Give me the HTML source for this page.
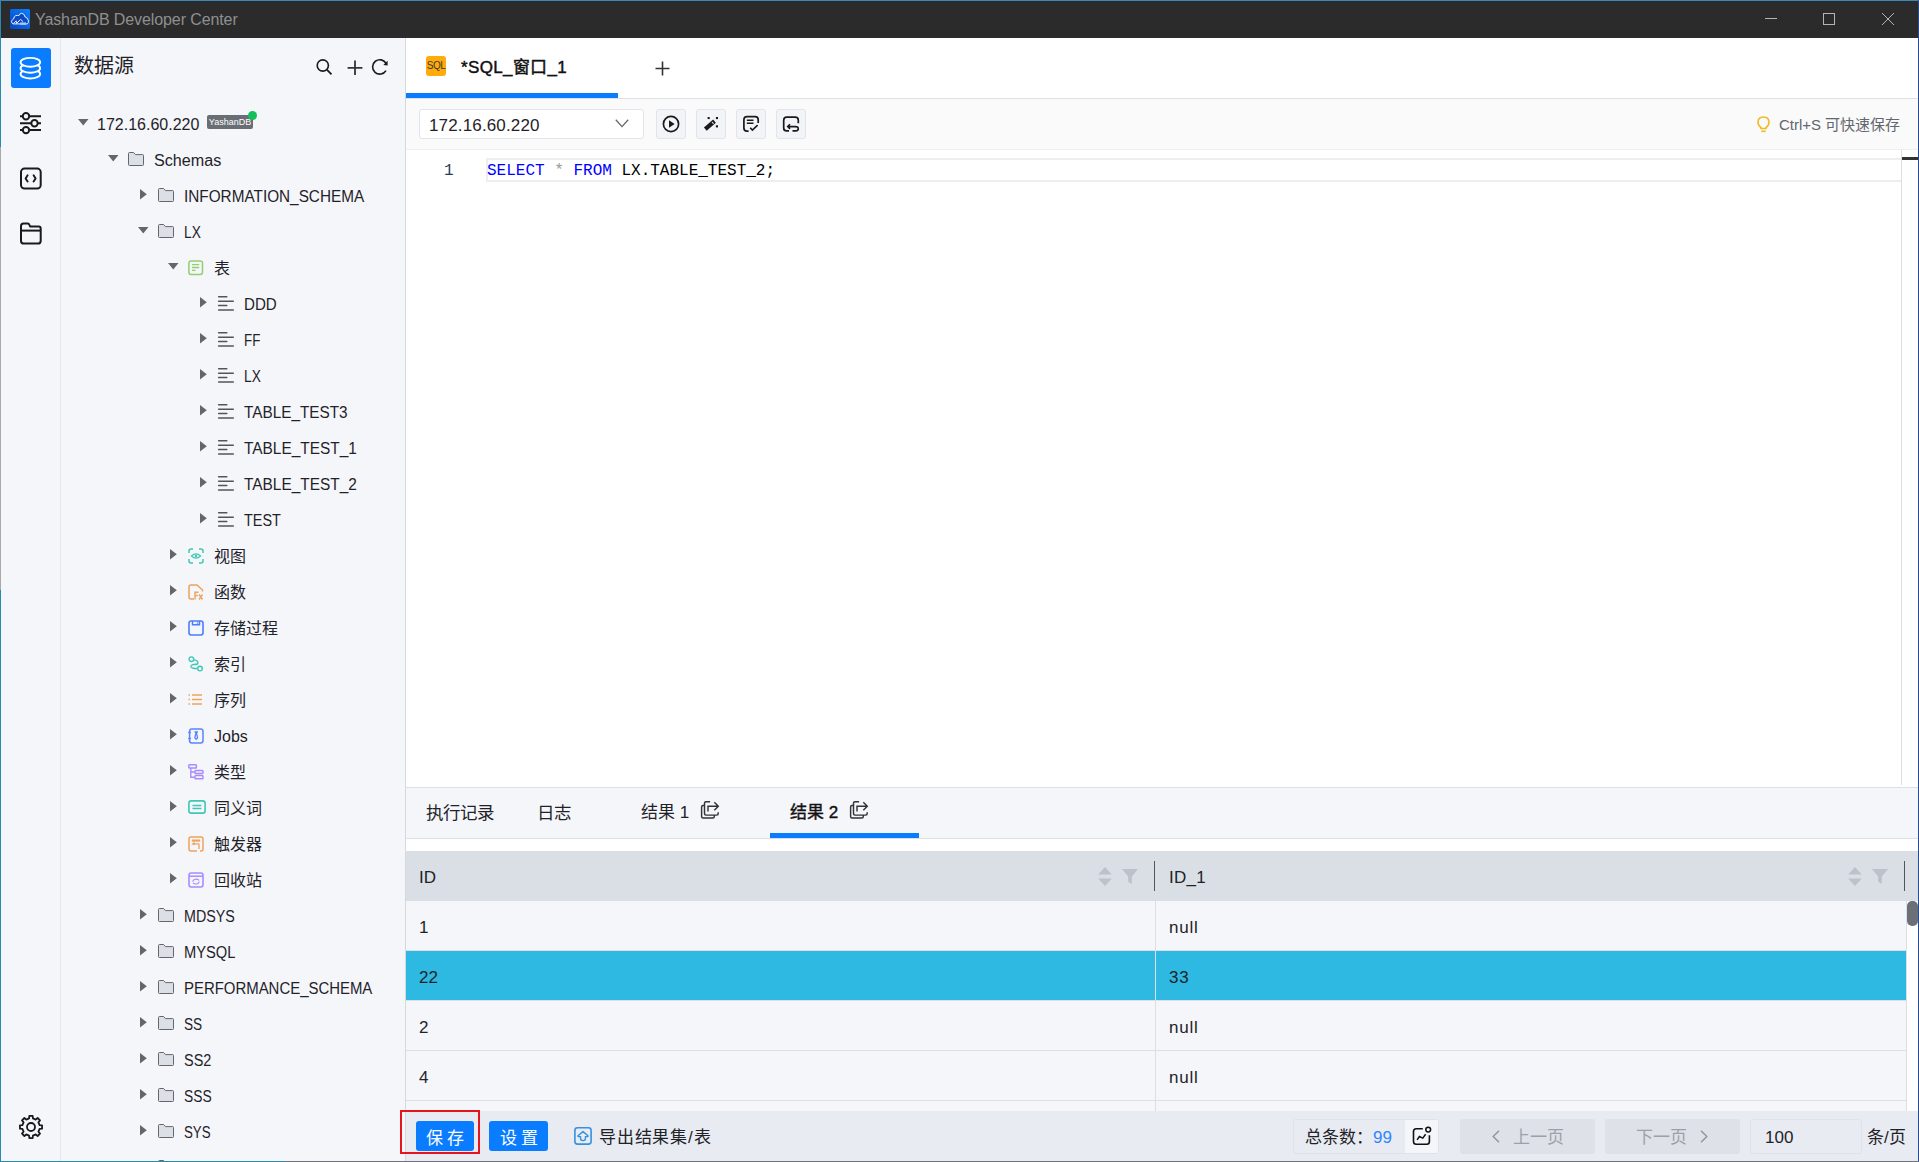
<!DOCTYPE html><html lang="zh-CN"><head><meta charset="utf-8"><style>
*{box-sizing:border-box;margin:0;padding:0}
html,body{width:1919px;height:1162px;overflow:hidden;background:#f5f6fa;font-family:"Liberation Sans",sans-serif;color:#1f2329}
.a{position:absolute}
svg.a{overflow:visible}
</style></head><body>
<div class="a" style="left:0;top:0;width:1919px;height:38px;background:#2b2b2b"></div>
<div class="a" style="left:0;top:0;width:1919px;height:1px;background:#3d86b8"></div>
<svg class="a" style="left:10px;top:9px" width="20" height="20" viewBox="0 0 20 20" fill="none"><defs><linearGradient id="ag" x1="1" y1="0" x2="0" y2="1"><stop offset="0" stop-color="#0a82ff"/><stop offset="1" stop-color="#0645c4"/></linearGradient></defs><rect x="0" y="0" width="20" height="20" rx="1.5" fill="url(#ag)"/><path d="M3.3 14.9 Q1.2 14.2 1.6 12.3 Q2 10.6 3.6 10 Q4 7.2 5.8 6.6 Q7.6 6.2 8.9 6.6 Q10 4.2 11.7 4.3 Q14.2 4.4 15.1 8 Q17.6 8.6 18.3 11.2 Q18.8 14 17.3 14.9 Z" fill="#0a48c4" stroke="#e8f0ff" stroke-width="1"/><path d="M3.4 14.8 L6.1 11.8 L6.6 14.5 L10.5 10.4 L13 12.6" stroke="#e8f0ff" stroke-width="1" fill="none"/><rect x="10.2" y="13.4" width="5.8" height="2.4" fill="#a9c4f5"/></svg>
<div class="a" style="left:35px;top:10px;font-size:16px;line-height:20px;color:#8f8f8f;font-weight:normal;white-space:nowrap;letter-spacing:-0.1px">YashanDB Developer Center</div>
<svg class="a" style="left:1765px;top:18px" width="12" height="1" viewBox="0 0 12 1" fill="none"><rect x="0" y="0" width="12" height="1" fill="#b5b5b5"/></svg>
<svg class="a" style="left:1823px;top:13px" width="12" height="12" viewBox="0 0 12 12" fill="none"><rect x="0.5" y="0.5" width="11" height="11" stroke="#b5b5b5" stroke-width="1"/></svg>
<svg class="a" style="left:1882px;top:13px" width="12" height="12" viewBox="0 0 12 12" fill="none"><path d="M0 0 L12 12 M12 0 L0 12" stroke="#b5b5b5" stroke-width="1"/></svg>
<div class="a" style="left:1px;top:38px;width:60px;height:1123px;background:#f5f6fa;border-right:1px solid #e4e7ed"></div>
<div class="a" style="left:11px;top:48px;width:40px;height:40px;background:#0a7cff;border-radius:3px"></div>
<svg class="a" style="left:19px;top:56px" width="23" height="24" viewBox="0 0 23 24" fill="none"><ellipse cx="11.35" cy="18.1" rx="9.8" ry="4.4" fill="#0a7cff" stroke="#fff" stroke-width="1.9"/><ellipse cx="11.35" cy="12.3" rx="9.8" ry="4.4" fill="#0a7cff" stroke="#fff" stroke-width="1.9"/><ellipse cx="11.35" cy="6.3" rx="9.8" ry="4.4" fill="#0a7cff" stroke="#fff" stroke-width="1.9"/></svg>
<svg class="a" style="left:19px;top:112px" width="23" height="22" viewBox="0 0 23 22" fill="none"><path d="M1 4.3 H4 M10.5 4.3 H22 M1 11.3 H12 M18.5 11.3 H22 M1 18.1 H4 M10.5 18.1 H22" stroke="#1a1a1a" stroke-width="2"/><circle cx="7" cy="4.3" r="3.2" stroke="#1a1a1a" stroke-width="2"/><circle cx="15.5" cy="11.3" r="3.2" stroke="#1a1a1a" stroke-width="2"/><circle cx="7" cy="18.1" r="3.2" stroke="#1a1a1a" stroke-width="2"/></svg>
<svg class="a" style="left:19px;top:167px" width="23" height="23" viewBox="0 0 23 23" fill="none"><rect x="2" y="1.6" width="19.7" height="20" rx="3.5" stroke="#1a1a1a" stroke-width="2"/><path d="M8.6 8.2 L6.6 11.4 L8.6 14.6 M14.6 8.2 L16.6 11.4 L14.6 14.6" stroke="#1a1a1a" stroke-width="1.9" stroke-linecap="round" stroke-linejoin="round"/></svg>
<svg class="a" style="left:19px;top:222px" width="23" height="23" viewBox="0 0 23 23" fill="none"><path d="M2 4 Q2 1.4 4.5 1.4 H8.8 Q9.8 1.4 10.3 2.6 L11.2 4.6 H19.7 Q21.7 4.6 21.7 6.6 V18.7 Q21.7 21.6 18.7 21.6 H5 Q2 21.6 2 18.7 Z" stroke="#1a1a1a" stroke-width="2" stroke-linejoin="round"/><path d="M2 8.6 H21.7" stroke="#1a1a1a" stroke-width="2"/></svg>
<svg class="a" style="left:19px;top:1115px" width="24" height="24" viewBox="0 0 24 24" fill="none"><path d="M20.59 10.08 L23.07 10.33 L23.07 13.67 L20.59 13.92 L19.43 16.71 L21.01 18.65 L18.65 21.01 L16.71 19.43 L13.92 20.59 L13.67 23.07 L10.33 23.07 L10.08 20.59 L7.29 19.43 L5.35 21.01 L2.99 18.65 L4.57 16.71 L3.41 13.92 L0.93 13.67 L0.93 10.33 L3.41 10.08 L4.57 7.29 L2.99 5.35 L5.35 2.99 L7.29 4.57 L10.08 3.41 L10.33 0.93 L13.67 0.93 L13.92 3.41 L16.71 4.57 L18.65 2.99 L21.01 5.35 L19.43 7.29 Z" stroke="#1a1a1a" stroke-width="1.8" stroke-linejoin="round"/><circle cx="12" cy="12" r="4" stroke="#1a1a1a" stroke-width="1.8"/></svg>
<div class="a" style="left:61px;top:38px;width:345px;height:1123px;background:#f5f6fa;border-right:1px solid #d5d8de"></div>
<div class="a" style="left:74px;top:55px;font-size:20px;line-height:22px;color:#1f2329;font-weight:normal;white-space:nowrap">数据源</div>
<svg class="a" style="left:315px;top:58px" width="20" height="20" viewBox="0 0 20 20" fill="none"><circle cx="7.8" cy="7.5" r="5.6" stroke="#1a1a1a" stroke-width="1.6"/><path d="M11.8 11.6 L16.5 16.3" stroke="#1a1a1a" stroke-width="1.8"/></svg>
<svg class="a" style="left:345px;top:59px" width="20" height="18" viewBox="0 0 20 18" fill="none"><path d="M10 1.5 V16 M2.6 8.9 H17.4" stroke="#333" stroke-width="1.8"/></svg>
<svg class="a" style="left:369px;top:58px" width="22" height="20" viewBox="0 0 22 20" fill="none"><path d="M17 12.6 A7.2 7.2 0 1 1 17.2 5.6" stroke="#1a1a1a" stroke-width="1.6"/><path d="M18.6 2.8 L18.6 7.5 L14.3 6.9 Z" fill="#1a1a1a"/></svg>
<svg class="a" style="left:78px;top:119px" width="11" height="7" viewBox="0 0 11 7" fill="none"><path d="M0 0 H10.5 L5.25 6.5 Z" fill="#62666d"/></svg>
<div class="a" style="left:97px;top:107px;font-size:16px;line-height:36px;color:#1f2329;font-weight:normal;white-space:nowrap">172.16.60.220</div>
<svg class="a" style="left:108px;top:155px" width="11" height="7" viewBox="0 0 11 7" fill="none"><path d="M0 0 H10.5 L5.25 6.5 Z" fill="#62666d"/></svg>
<svg class="a" style="left:128.0px;top:152px" width="16" height="14" viewBox="0 0 16 14" fill="none"><path d="M0.5 1.5 Q0.5 0.5 1.5 0.5 H5.6 L7.4 2.6 H14.6 Q15.5 2.6 15.5 3.5 V12.6 Q15.5 13.5 14.6 13.5 H1.5 Q0.5 13.5 0.5 12.6 Z" fill="#dcdfe6" stroke="#62666d" stroke-width="1"/></svg>
<div class="a" style="left:154px;top:143px;font-size:16px;line-height:36px;color:#1f2329;font-weight:normal;white-space:nowrap;transform:scaleX(1.0090);transform-origin:0 0">Schemas</div>
<svg class="a" style="left:140px;top:189px" width="7" height="11" viewBox="0 0 7 11" fill="none"><path d="M0 0 V10.5 L6.8 5.25 Z" fill="#62666d"/></svg>
<svg class="a" style="left:158.0px;top:188px" width="16" height="14" viewBox="0 0 16 14" fill="none"><path d="M0.5 1.5 Q0.5 0.5 1.5 0.5 H5.6 L7.4 2.6 H14.6 Q15.5 2.6 15.5 3.5 V12.6 Q15.5 13.5 14.6 13.5 H1.5 Q0.5 13.5 0.5 12.6 Z" fill="#dcdfe6" stroke="#62666d" stroke-width="1"/></svg>
<div class="a" style="left:184px;top:179px;font-size:16px;line-height:36px;color:#1f2329;font-weight:normal;white-space:nowrap;transform:scaleX(0.9577);transform-origin:0 0">INFORMATION_SCHEMA</div>
<svg class="a" style="left:138px;top:227px" width="11" height="7" viewBox="0 0 11 7" fill="none"><path d="M0 0 H10.5 L5.25 6.5 Z" fill="#62666d"/></svg>
<svg class="a" style="left:158.0px;top:224px" width="16" height="14" viewBox="0 0 16 14" fill="none"><path d="M0.5 1.5 Q0.5 0.5 1.5 0.5 H5.6 L7.4 2.6 H14.6 Q15.5 2.6 15.5 3.5 V12.6 Q15.5 13.5 14.6 13.5 H1.5 Q0.5 13.5 0.5 12.6 Z" fill="#dcdfe6" stroke="#62666d" stroke-width="1"/></svg>
<div class="a" style="left:184px;top:215px;font-size:16px;line-height:36px;color:#1f2329;font-weight:normal;white-space:nowrap;transform:scaleX(0.8575);transform-origin:0 0">LX</div>
<svg class="a" style="left:168px;top:263px" width="11" height="7" viewBox="0 0 11 7" fill="none"><path d="M0 0 H10.5 L5.25 6.5 Z" fill="#62666d"/></svg>
<svg class="a" style="left:188px;top:259.5px" width="15" height="15" viewBox="0 0 15 15" fill="none"><rect x="0.9" y="0.9" width="13.6" height="13.6" rx="2.2" stroke="#93d06c" stroke-width="1.5"/><path d="M4 4.6 H11.2 M4 7.5 H11.2 M4 10.4 H7.6" stroke="#93d06c" stroke-width="1.3"/></svg>
<div class="a" style="left:214px;top:251px;font-size:16px;line-height:36px;color:#1f2329;font-weight:normal;white-space:nowrap">表</div>
<svg class="a" style="left:200px;top:297px" width="7" height="11" viewBox="0 0 7 11" fill="none"><path d="M0 0 V10.5 L6.8 5.25 Z" fill="#62666d"/></svg>
<svg class="a" style="left:218px;top:295.5px" width="16" height="16" viewBox="0 0 16 16" fill="none"><path d="M0.6 0.7 H8.8 M0.6 5.2 H15.3 M0.6 9.6 H8.8 M0.6 14.1 H15.3" stroke="#555" stroke-width="1.5" stroke-linecap="round"/></svg>
<div class="a" style="left:244px;top:287px;font-size:16px;line-height:36px;color:#1f2329;font-weight:normal;white-space:nowrap;transform:scaleX(0.9441);transform-origin:0 0">DDD</div>
<svg class="a" style="left:200px;top:333px" width="7" height="11" viewBox="0 0 7 11" fill="none"><path d="M0 0 V10.5 L6.8 5.25 Z" fill="#62666d"/></svg>
<svg class="a" style="left:218px;top:331.5px" width="16" height="16" viewBox="0 0 16 16" fill="none"><path d="M0.6 0.7 H8.8 M0.6 5.2 H15.3 M0.6 9.6 H8.8 M0.6 14.1 H15.3" stroke="#555" stroke-width="1.5" stroke-linecap="round"/></svg>
<div class="a" style="left:244px;top:323px;font-size:16px;line-height:36px;color:#1f2329;font-weight:normal;white-space:nowrap;transform:scaleX(0.8350);transform-origin:0 0">FF</div>
<svg class="a" style="left:200px;top:369px" width="7" height="11" viewBox="0 0 7 11" fill="none"><path d="M0 0 V10.5 L6.8 5.25 Z" fill="#62666d"/></svg>
<svg class="a" style="left:218px;top:367.5px" width="16" height="16" viewBox="0 0 16 16" fill="none"><path d="M0.6 0.7 H8.8 M0.6 5.2 H15.3 M0.6 9.6 H8.8 M0.6 14.1 H15.3" stroke="#555" stroke-width="1.5" stroke-linecap="round"/></svg>
<div class="a" style="left:244px;top:359px;font-size:16px;line-height:36px;color:#1f2329;font-weight:normal;white-space:nowrap;transform:scaleX(0.8575);transform-origin:0 0">LX</div>
<svg class="a" style="left:200px;top:405px" width="7" height="11" viewBox="0 0 7 11" fill="none"><path d="M0 0 V10.5 L6.8 5.25 Z" fill="#62666d"/></svg>
<svg class="a" style="left:218px;top:403.5px" width="16" height="16" viewBox="0 0 16 16" fill="none"><path d="M0.6 0.7 H8.8 M0.6 5.2 H15.3 M0.6 9.6 H8.8 M0.6 14.1 H15.3" stroke="#555" stroke-width="1.5" stroke-linecap="round"/></svg>
<div class="a" style="left:244px;top:395px;font-size:16px;line-height:36px;color:#1f2329;font-weight:normal;white-space:nowrap;transform:scaleX(0.9574);transform-origin:0 0">TABLE_TEST3</div>
<svg class="a" style="left:200px;top:441px" width="7" height="11" viewBox="0 0 7 11" fill="none"><path d="M0 0 V10.5 L6.8 5.25 Z" fill="#62666d"/></svg>
<svg class="a" style="left:218px;top:439.5px" width="16" height="16" viewBox="0 0 16 16" fill="none"><path d="M0.6 0.7 H8.8 M0.6 5.2 H15.3 M0.6 9.6 H8.8 M0.6 14.1 H15.3" stroke="#555" stroke-width="1.5" stroke-linecap="round"/></svg>
<div class="a" style="left:244px;top:431px;font-size:16px;line-height:36px;color:#1f2329;font-weight:normal;white-space:nowrap;transform:scaleX(0.9632);transform-origin:0 0">TABLE_TEST_1</div>
<svg class="a" style="left:200px;top:477px" width="7" height="11" viewBox="0 0 7 11" fill="none"><path d="M0 0 V10.5 L6.8 5.25 Z" fill="#62666d"/></svg>
<svg class="a" style="left:218px;top:475.5px" width="16" height="16" viewBox="0 0 16 16" fill="none"><path d="M0.6 0.7 H8.8 M0.6 5.2 H15.3 M0.6 9.6 H8.8 M0.6 14.1 H15.3" stroke="#555" stroke-width="1.5" stroke-linecap="round"/></svg>
<div class="a" style="left:244px;top:467px;font-size:16px;line-height:36px;color:#1f2329;font-weight:normal;white-space:nowrap;transform:scaleX(0.9632);transform-origin:0 0">TABLE_TEST_2</div>
<svg class="a" style="left:200px;top:513px" width="7" height="11" viewBox="0 0 7 11" fill="none"><path d="M0 0 V10.5 L6.8 5.25 Z" fill="#62666d"/></svg>
<svg class="a" style="left:218px;top:511.5px" width="16" height="16" viewBox="0 0 16 16" fill="none"><path d="M0.6 0.7 H8.8 M0.6 5.2 H15.3 M0.6 9.6 H8.8 M0.6 14.1 H15.3" stroke="#555" stroke-width="1.5" stroke-linecap="round"/></svg>
<div class="a" style="left:244px;top:503px;font-size:16px;line-height:36px;color:#1f2329;font-weight:normal;white-space:nowrap;transform:scaleX(0.9000);transform-origin:0 0">TEST</div>
<svg class="a" style="left:170px;top:549px" width="7" height="11" viewBox="0 0 7 11" fill="none"><path d="M0 0 V10.5 L6.8 5.25 Z" fill="#62666d"/></svg>
<svg class="a" style="left:188px;top:547.5px" width="16" height="16" viewBox="0 0 16 16" fill="none"><path d="M1 5 V3 Q1 1 3 1 H5 M11 1 H13 Q15 1 15 3 V5 M15 11 V13 Q15 15 13 15 H11 M5 15 H3 Q1 15 1 13 V11" stroke="#3fc7b6" stroke-width="1.5"/><path d="M3.5 8 Q8 3.8 12.5 8 Q8 12.2 3.5 8 Z" stroke="#3fc7b6" stroke-width="1.3"/><circle cx="8" cy="8" r="1.2" fill="#3fc7b6"/></svg>
<div class="a" style="left:214px;top:539px;font-size:16px;line-height:36px;color:#1f2329;font-weight:normal;white-space:nowrap">视图</div>
<svg class="a" style="left:170px;top:585px" width="7" height="11" viewBox="0 0 7 11" fill="none"><path d="M0 0 V10.5 L6.8 5.25 Z" fill="#62666d"/></svg>
<svg class="a" style="left:188px;top:583.5px" width="16" height="16" viewBox="0 0 16 16" fill="none"><path d="M6 15 H3 Q1 15 1 13 V3 Q1 1 3 1 H9 L14.5 6 V7.5" stroke="#f0a25c" stroke-width="1.5"/><path d="M7 15.5 V8.3 H10.5 M7 11.5 H9.8" stroke="#f0a25c" stroke-width="1.4"/><path d="M11 10.5 L14.5 15.5 M14.5 10.5 L11 15.5" stroke="#f0a25c" stroke-width="1.4"/></svg>
<div class="a" style="left:214px;top:575px;font-size:16px;line-height:36px;color:#1f2329;font-weight:normal;white-space:nowrap">函数</div>
<svg class="a" style="left:170px;top:621px" width="7" height="11" viewBox="0 0 7 11" fill="none"><path d="M0 0 V10.5 L6.8 5.25 Z" fill="#62666d"/></svg>
<svg class="a" style="left:188px;top:619.5px" width="16" height="16" viewBox="0 0 16 16" fill="none"><rect x="1" y="1" width="14" height="14" rx="2.2" stroke="#4a7dff" stroke-width="1.6"/><path d="M4.5 1 V4.8 H11.5 V1" stroke="#4a7dff" stroke-width="1.5"/><circle cx="9.5" cy="3" r="0.8" fill="#4a7dff"/></svg>
<div class="a" style="left:214px;top:611px;font-size:16px;line-height:36px;color:#1f2329;font-weight:normal;white-space:nowrap">存储过程</div>
<svg class="a" style="left:170px;top:657px" width="7" height="11" viewBox="0 0 7 11" fill="none"><path d="M0 0 V10.5 L6.8 5.25 Z" fill="#62666d"/></svg>
<svg class="a" style="left:188px;top:655.5px" width="16" height="16" viewBox="0 0 16 16" fill="none"><circle cx="3.4" cy="3.2" r="2.3" stroke="#3fc7b6" stroke-width="1.4"/><circle cx="12" cy="12.6" r="2.3" stroke="#3fc7b6" stroke-width="1.4"/><path d="M5.6 3.6 Q10.5 4.5 9.8 7.5 Q9.6 8.5 5.5 8.5 Q2.5 9 3 11 Q3.5 12.5 9.7 12.6" stroke="#3fc7b6" stroke-width="1.4"/></svg>
<div class="a" style="left:214px;top:647px;font-size:16px;line-height:36px;color:#1f2329;font-weight:normal;white-space:nowrap">索引</div>
<svg class="a" style="left:170px;top:693px" width="7" height="11" viewBox="0 0 7 11" fill="none"><path d="M0 0 V10.5 L6.8 5.25 Z" fill="#62666d"/></svg>
<svg class="a" style="left:188px;top:691.5px" width="16" height="16" viewBox="0 0 16 16" fill="none"><path d="M4 3 H14 M4 7.5 H14 M4 12 H14" stroke="#f0a25c" stroke-width="1.3"/><path d="M0.5 3 H2 M0.5 7.5 H2 M0.5 12 H2" stroke="#f0a25c" stroke-width="1.3"/></svg>
<div class="a" style="left:214px;top:683px;font-size:16px;line-height:36px;color:#1f2329;font-weight:normal;white-space:nowrap">序列</div>
<svg class="a" style="left:170px;top:729px" width="7" height="11" viewBox="0 0 7 11" fill="none"><path d="M0 0 V10.5 L6.8 5.25 Z" fill="#62666d"/></svg>
<svg class="a" style="left:188px;top:727.5px" width="16" height="16" viewBox="0 0 16 16" fill="none"><rect x="1.6" y="1" width="13.4" height="14" rx="2.2" stroke="#5a84ff" stroke-width="1.5"/><path d="M0.3 4.5 H3 M0.3 10.5 H3" stroke="#5a84ff" stroke-width="1.3"/><path d="M6.5 4 H10 M8.2 4 L6.8 9.8 L8.2 11.3 L9.6 9.8 Z" stroke="#5a84ff" stroke-width="1.3" stroke-linejoin="round"/></svg>
<div class="a" style="left:214px;top:719px;font-size:16px;line-height:36px;color:#1f2329;font-weight:normal;white-space:nowrap">Jobs</div>
<svg class="a" style="left:170px;top:765px" width="7" height="11" viewBox="0 0 7 11" fill="none"><path d="M0 0 V10.5 L6.8 5.25 Z" fill="#62666d"/></svg>
<svg class="a" style="left:188px;top:763.5px" width="16" height="16" viewBox="0 0 16 16" fill="none"><rect x="0.8" y="0.8" width="7.6" height="3.2" rx="0.8" stroke="#a98bff" stroke-width="1.5"/><rect x="7" y="6.4" width="8" height="3.2" rx="0.8" stroke="#a98bff" stroke-width="1.5"/><rect x="7" y="11.6" width="8" height="3.2" rx="0.8" stroke="#a98bff" stroke-width="1.5"/><path d="M2.8 4 V13.2 H7 M2.8 8 H7" stroke="#a98bff" stroke-width="1.4"/></svg>
<div class="a" style="left:214px;top:755px;font-size:16px;line-height:36px;color:#1f2329;font-weight:normal;white-space:nowrap">类型</div>
<svg class="a" style="left:170px;top:801px" width="7" height="11" viewBox="0 0 7 11" fill="none"><path d="M0 0 V10.5 L6.8 5.25 Z" fill="#62666d"/></svg>
<svg class="a" style="left:188px;top:799.5px" width="18" height="14" viewBox="0 0 18 14" fill="none"><rect x="0.9" y="0.9" width="16.2" height="12.2" rx="2.4" stroke="#3fc7b6" stroke-width="1.6"/><path d="M4.5 5.5 H13.5 M4.5 8.5 H13.5" stroke="#3fc7b6" stroke-width="1.4"/></svg>
<div class="a" style="left:214px;top:791px;font-size:16px;line-height:36px;color:#1f2329;font-weight:normal;white-space:nowrap">同义词</div>
<svg class="a" style="left:170px;top:837px" width="7" height="11" viewBox="0 0 7 11" fill="none"><path d="M0 0 V10.5 L6.8 5.25 Z" fill="#62666d"/></svg>
<svg class="a" style="left:188px;top:835.5px" width="16" height="16" viewBox="0 0 16 16" fill="none"><path d="M9 15 H3 Q1 15 1 13 V3 Q1 1 3 1 H13 Q15 1 15 3 V13 Q15 15 13 15 H12" stroke="#f0a25c" stroke-width="1.5"/><path d="M3.8 4.6 H12.2" stroke="#f0a25c" stroke-width="2.2"/><path d="M11 7.8 V13 M11 7.8 H5 L6.4 6.6 M5 7.8 L6.4 9" stroke="#f0a25c" stroke-width="1.3"/></svg>
<div class="a" style="left:214px;top:827px;font-size:16px;line-height:36px;color:#1f2329;font-weight:normal;white-space:nowrap">触发器</div>
<svg class="a" style="left:170px;top:873px" width="7" height="11" viewBox="0 0 7 11" fill="none"><path d="M0 0 V10.5 L6.8 5.25 Z" fill="#62666d"/></svg>
<svg class="a" style="left:188px;top:871.5px" width="16" height="16" viewBox="0 0 16 16" fill="none"><rect x="1" y="1" width="14" height="14" rx="2.2" stroke="#a98bff" stroke-width="1.6"/><path d="M1 4.2 H15" stroke="#a98bff" stroke-width="1.5"/><path d="M4.6 9.6 Q5.5 7.2 8 7.2 Q10 7.2 11 8.4 M11.4 9.6 Q10.5 12 8 12 Q6 12 5 10.8" stroke="#a98bff" stroke-width="1.2"/></svg>
<div class="a" style="left:214px;top:863px;font-size:16px;line-height:36px;color:#1f2329;font-weight:normal;white-space:nowrap">回收站</div>
<svg class="a" style="left:140px;top:909px" width="7" height="11" viewBox="0 0 7 11" fill="none"><path d="M0 0 V10.5 L6.8 5.25 Z" fill="#62666d"/></svg>
<svg class="a" style="left:158.0px;top:908px" width="16" height="14" viewBox="0 0 16 14" fill="none"><path d="M0.5 1.5 Q0.5 0.5 1.5 0.5 H5.6 L7.4 2.6 H14.6 Q15.5 2.6 15.5 3.5 V12.6 Q15.5 13.5 14.6 13.5 H1.5 Q0.5 13.5 0.5 12.6 Z" fill="#dcdfe6" stroke="#62666d" stroke-width="1"/></svg>
<div class="a" style="left:184px;top:899px;font-size:16px;line-height:36px;color:#1f2329;font-weight:normal;white-space:nowrap;transform:scaleX(0.8930);transform-origin:0 0">MDSYS</div>
<svg class="a" style="left:140px;top:945px" width="7" height="11" viewBox="0 0 7 11" fill="none"><path d="M0 0 V10.5 L6.8 5.25 Z" fill="#62666d"/></svg>
<svg class="a" style="left:158.0px;top:944px" width="16" height="14" viewBox="0 0 16 14" fill="none"><path d="M0.5 1.5 Q0.5 0.5 1.5 0.5 H5.6 L7.4 2.6 H14.6 Q15.5 2.6 15.5 3.5 V12.6 Q15.5 13.5 14.6 13.5 H1.5 Q0.5 13.5 0.5 12.6 Z" fill="#dcdfe6" stroke="#62666d" stroke-width="1"/></svg>
<div class="a" style="left:184px;top:935px;font-size:16px;line-height:36px;color:#1f2329;font-weight:normal;white-space:nowrap;transform:scaleX(0.9179);transform-origin:0 0">MYSQL</div>
<svg class="a" style="left:140px;top:981px" width="7" height="11" viewBox="0 0 7 11" fill="none"><path d="M0 0 V10.5 L6.8 5.25 Z" fill="#62666d"/></svg>
<svg class="a" style="left:158.0px;top:980px" width="16" height="14" viewBox="0 0 16 14" fill="none"><path d="M0.5 1.5 Q0.5 0.5 1.5 0.5 H5.6 L7.4 2.6 H14.6 Q15.5 2.6 15.5 3.5 V12.6 Q15.5 13.5 14.6 13.5 H1.5 Q0.5 13.5 0.5 12.6 Z" fill="#dcdfe6" stroke="#62666d" stroke-width="1"/></svg>
<div class="a" style="left:184px;top:971px;font-size:16px;line-height:36px;color:#1f2329;font-weight:normal;white-space:nowrap;transform:scaleX(0.9332);transform-origin:0 0">PERFORMANCE_SCHEMA</div>
<svg class="a" style="left:140px;top:1017px" width="7" height="11" viewBox="0 0 7 11" fill="none"><path d="M0 0 V10.5 L6.8 5.25 Z" fill="#62666d"/></svg>
<svg class="a" style="left:158.0px;top:1016px" width="16" height="14" viewBox="0 0 16 14" fill="none"><path d="M0.5 1.5 Q0.5 0.5 1.5 0.5 H5.6 L7.4 2.6 H14.6 Q15.5 2.6 15.5 3.5 V12.6 Q15.5 13.5 14.6 13.5 H1.5 Q0.5 13.5 0.5 12.6 Z" fill="#dcdfe6" stroke="#62666d" stroke-width="1"/></svg>
<div class="a" style="left:184px;top:1007px;font-size:16px;line-height:36px;color:#1f2329;font-weight:normal;white-space:nowrap;transform:scaleX(0.8524);transform-origin:0 0">SS</div>
<svg class="a" style="left:140px;top:1053px" width="7" height="11" viewBox="0 0 7 11" fill="none"><path d="M0 0 V10.5 L6.8 5.25 Z" fill="#62666d"/></svg>
<svg class="a" style="left:158.0px;top:1052px" width="16" height="14" viewBox="0 0 16 14" fill="none"><path d="M0.5 1.5 Q0.5 0.5 1.5 0.5 H5.6 L7.4 2.6 H14.6 Q15.5 2.6 15.5 3.5 V12.6 Q15.5 13.5 14.6 13.5 H1.5 Q0.5 13.5 0.5 12.6 Z" fill="#dcdfe6" stroke="#62666d" stroke-width="1"/></svg>
<div class="a" style="left:184px;top:1043px;font-size:16px;line-height:36px;color:#1f2329;font-weight:normal;white-space:nowrap;transform:scaleX(0.9033);transform-origin:0 0">SS2</div>
<svg class="a" style="left:140px;top:1089px" width="7" height="11" viewBox="0 0 7 11" fill="none"><path d="M0 0 V10.5 L6.8 5.25 Z" fill="#62666d"/></svg>
<svg class="a" style="left:158.0px;top:1088px" width="16" height="14" viewBox="0 0 16 14" fill="none"><path d="M0.5 1.5 Q0.5 0.5 1.5 0.5 H5.6 L7.4 2.6 H14.6 Q15.5 2.6 15.5 3.5 V12.6 Q15.5 13.5 14.6 13.5 H1.5 Q0.5 13.5 0.5 12.6 Z" fill="#dcdfe6" stroke="#62666d" stroke-width="1"/></svg>
<div class="a" style="left:184px;top:1079px;font-size:16px;line-height:36px;color:#1f2329;font-weight:normal;white-space:nowrap;transform:scaleX(0.8625);transform-origin:0 0">SSS</div>
<svg class="a" style="left:140px;top:1125px" width="7" height="11" viewBox="0 0 7 11" fill="none"><path d="M0 0 V10.5 L6.8 5.25 Z" fill="#62666d"/></svg>
<svg class="a" style="left:158.0px;top:1124px" width="16" height="14" viewBox="0 0 16 14" fill="none"><path d="M0.5 1.5 Q0.5 0.5 1.5 0.5 H5.6 L7.4 2.6 H14.6 Q15.5 2.6 15.5 3.5 V12.6 Q15.5 13.5 14.6 13.5 H1.5 Q0.5 13.5 0.5 12.6 Z" fill="#dcdfe6" stroke="#62666d" stroke-width="1"/></svg>
<div class="a" style="left:184px;top:1115px;font-size:16px;line-height:36px;color:#1f2329;font-weight:normal;white-space:nowrap;transform:scaleX(0.8312);transform-origin:0 0">SYS</div>
<svg class="a" style="left:140px;top:1161px" width="7" height="11" viewBox="0 0 7 11" fill="none"><path d="M0 0 V10.5 L6.8 5.25 Z" fill="#62666d"/></svg>
<svg class="a" style="left:158.0px;top:1160px" width="16" height="14" viewBox="0 0 16 14" fill="none"><path d="M0.5 1.5 Q0.5 0.5 1.5 0.5 H5.6 L7.4 2.6 H14.6 Q15.5 2.6 15.5 3.5 V12.6 Q15.5 13.5 14.6 13.5 H1.5 Q0.5 13.5 0.5 12.6 Z" fill="#dcdfe6" stroke="#62666d" stroke-width="1"/></svg>
<div class="a" style="left:207px;top:115px;width:46px;height:14px;background:#696d74;border-radius:2px;color:#fff;font-size:9px;line-height:14px;text-align:center;white-space:nowrap">YashanDB</div>
<div class="a" style="left:248px;top:111px;width:9px;height:9px;background:#12c15b;border-radius:50%"></div>
<div class="a" style="left:406px;top:38px;width:1512px;height:1123px;background:#fff"></div>
<div class="a" style="left:426px;top:56px;width:20px;height:20px;background:#ffac0a;border-radius:3px;font-size:10px;line-height:20px;color:#3a3a3a;text-align:center;letter-spacing:-0.5px">SQL</div>
<div class="a" style="left:461px;top:58px;font-size:17px;line-height:20px;color:#111;font-weight:500;white-space:nowrap;-webkit-text-stroke:0.45px #111;letter-spacing:0.35px">*SQL_窗口_1</div>
<svg class="a" style="left:655px;top:61px" width="15" height="15" viewBox="0 0 15 15" fill="none"><path d="M7.5 0.5 V14.5 M0.5 7.5 H14.5" stroke="#333" stroke-width="1.6"/></svg>
<div class="a" style="left:406px;top:93px;width:212px;height:5px;background:#0a7cff"></div>
<div class="a" style="left:406px;top:98px;width:1512px;height:52px;background:#fafafa;border-top:1px solid #dde0e5;border-bottom:1px solid #efefef"></div>
<div class="a" style="left:419px;top:109px;width:225px;height:30px;background:#fff;border:1px solid #e1e4e9;border-radius:3px"></div>
<div class="a" style="left:429px;top:116px;font-size:17px;line-height:20px;color:#1f2329;font-weight:normal;white-space:nowrap;letter-spacing:0.15px">172.16.60.220</div>
<svg class="a" style="left:615px;top:119px" width="14" height="9" viewBox="0 0 14 9" fill="none"><path d="M0.8 0.8 L7 7.6 L13.2 0.8" stroke="#62666d" stroke-width="1.3"/></svg>
<div class="a" style="left:656px;top:109px;width:30px;height:30px;background:#f3f4f8;border:1px solid #e1e4ea;border-radius:3px"></div>
<div class="a" style="left:696px;top:109px;width:30px;height:30px;background:#f3f4f8;border:1px solid #e1e4ea;border-radius:3px"></div>
<div class="a" style="left:736px;top:109px;width:30px;height:30px;background:#f3f4f8;border:1px solid #e1e4ea;border-radius:3px"></div>
<div class="a" style="left:776px;top:109px;width:30px;height:30px;background:#f3f4f8;border:1px solid #e1e4ea;border-radius:3px"></div>
<svg class="a" style="left:662px;top:115px" width="18" height="18" viewBox="0 0 18 18" fill="none"><circle cx="9" cy="9" r="7.6" stroke="#1a1a1a" stroke-width="1.7"/><path d="M7 5.3 V12.7 L12.6 9 Z" fill="#1a1a1a"/></svg>
<svg class="a" style="left:696px;top:109px" width="30" height="30" viewBox="0 0 30 30" fill="none"><path d="M9.3 20.2 L18.5 12.2" stroke="#1a1a1a" stroke-width="4.2"/><path d="M16.0 13.0 L17.5 14.7" stroke="#f3f4f8" stroke-width="1.1"/><rect x="11.6" y="8" width="2.1" height="2.1" fill="#1a1a1a"/><rect x="19.9" y="8" width="2.1" height="2.1" fill="#1a1a1a"/><rect x="19.9" y="16.3" width="2.1" height="2.1" fill="#1a1a1a"/></svg>
<svg class="a" style="left:736px;top:109px" width="30" height="30" viewBox="0 0 30 30" fill="none"><path d="M22.2 14 V10.8 Q22.2 7.7 19.1 7.7 H11 Q7.9 7.7 7.9 10.8 V19.1 Q7.9 22.2 11 22.2 H12.6" stroke="#1a1a1a" stroke-width="1.7"/><path d="M10.8 11.3 H17.5 M10.8 14.2 H17.5" stroke="#1a1a1a" stroke-width="1.5"/><path d="M14.2 18.7 L16.4 21.1 L21.6 16.1" stroke="#1a1a1a" stroke-width="1.6"/></svg>
<svg class="a" style="left:776px;top:109px" width="30" height="30" viewBox="0 0 30 30" fill="none"><path d="M22.3 14.2 V11.3 Q22.3 8.2 19.2 8.2 H10.8 Q7.7 8.2 7.7 11.3 V18.9 Q7.7 21.9 10.8 21.9 H13" stroke="#1a1a1a" stroke-width="1.7"/><path d="M14 15.3 L11.7 17.6 L14 19.9 M11.7 17.6 H19.6 Q22.3 17.6 22.3 19.75 Q22.3 21.9 19.6 21.9 H16.5" stroke="#1a1a1a" stroke-width="1.6"/></svg>
<svg class="a" style="left:1757px;top:116px" width="14" height="17" viewBox="0 0 14 17" fill="none"><path d="M4 11.5 Q1 9.5 1 6.3 Q1 1 6.5 1 Q12 1 12 6.3 Q12 9.5 9 11.5 V12.5 H4 Z" stroke="#f2b927" stroke-width="1.6"/><path d="M4.3 15.3 H8.7" stroke="#f2b927" stroke-width="1.6"/></svg>
<div class="a" style="left:1779px;top:116px;font-size:15px;line-height:18px;color:#62666d;font-weight:normal;white-space:nowrap">Ctrl+S 可快速保存</div>
<div class="a" style="left:406px;top:150px;width:1496px;height:637px;background:#fff"></div>
<div class="a" style="left:486px;top:158px;width:1416px;height:24px;border:2px solid #eeeeee;border-right:none"></div>
<div class="a" style="left:1901px;top:150px;width:1px;height:635px;background:#dedede"></div>
<div class="a" style="left:1902px;top:157px;width:16px;height:3px;background:#333"></div>
<div class="a" style="left:444px;top:162px;font-size:16px;line-height:18px;color:#2b3a55;font-weight:normal;font-family:'Liberation Mono',monospace;white-space:nowrap">1</div>
<div class="a" style="left:487px;top:162px;font-size:16px;line-height:18px;color:#000;font-weight:normal;font-family:'Liberation Mono',monospace;white-space:nowrap"><span style="color:#0000ff">SELECT</span> <span style="color:#999">*</span> <span style="color:#0000ff">FROM</span> LX.TABLE_TEST_2;</div>
<div class="a" style="left:406px;top:787px;width:1512px;height:52px;background:#f5f6fa;border-top:1px solid #dcdfe5;border-bottom:1px solid #dcdfe5"></div>
<div class="a" style="left:426px;top:803px;font-size:17.5px;line-height:20px;color:#1f2329;font-weight:normal;white-space:nowrap">执行记录</div>
<div class="a" style="left:537px;top:803px;font-size:17.5px;line-height:20px;color:#1f2329;font-weight:normal;white-space:nowrap">日志</div>
<div class="a" style="left:641px;top:803px;font-size:17px;line-height:20px;color:#1f2329;font-weight:normal;white-space:nowrap">结果 1</div>
<div class="a" style="left:790px;top:803px;font-size:17px;line-height:20px;color:#111;font-weight:500;white-space:nowrap;-webkit-text-stroke:0.4px #111">结果 2</div>
<svg class="a" style="left:696px;top:795px" width="30" height="30" viewBox="0 0 30 30" fill="none"><path d="M14.1 6.7 H10 Q8.5 6.7 8.5 8.2 V18.6 Q8.5 20.1 10 20.1 H20.7 Q22.2 20.1 22.2 18.6 V17.3" stroke="#333" stroke-width="1.45"/><path d="M8.5 10.5 H7.1 Q5.6 10.5 5.6 12 V21.5 Q5.6 23 7.1 23 H16.8 Q18.3 23 18.3 21.5 V20.1" stroke="#333" stroke-width="1.45"/><path d="M12 16.5 V11.2 H22.3 M18.3 7.2 L22.3 11.2 L18.3 15.2" stroke="#333" stroke-width="1.45"/></svg>
<svg class="a" style="left:845px;top:795px" width="30" height="30" viewBox="0 0 30 30" fill="none"><path d="M14.1 6.7 H10 Q8.5 6.7 8.5 8.2 V18.6 Q8.5 20.1 10 20.1 H20.7 Q22.2 20.1 22.2 18.6 V17.3" stroke="#333" stroke-width="1.45"/><path d="M8.5 10.5 H7.1 Q5.6 10.5 5.6 12 V21.5 Q5.6 23 7.1 23 H16.8 Q18.3 23 18.3 21.5 V20.1" stroke="#333" stroke-width="1.45"/><path d="M12 16.5 V11.2 H22.3 M18.3 7.2 L22.3 11.2 L18.3 15.2" stroke="#333" stroke-width="1.45"/></svg>
<div class="a" style="left:770px;top:833px;width:149px;height:5px;background:#0a7cff"></div>
<div class="a" style="left:406px;top:839px;width:1512px;height:272px;background:#fff"></div>
<div class="a" style="left:406px;top:851px;width:1512px;height:50px;background:#dadfe6"></div>
<div class="a" style="left:419px;top:868px;font-size:17px;line-height:20px;color:#1f2329;font-weight:normal;white-space:nowrap">ID</div>
<div class="a" style="left:1169px;top:868px;font-size:17px;line-height:20px;color:#1f2329;font-weight:normal;white-space:nowrap;letter-spacing:0.3px">ID_1</div>
<svg class="a" style="left:1098px;top:867px" width="14" height="19" viewBox="0 0 14 19" fill="none"><path d="M7 0 L13.8 7.6 H0.2 Z M0.2 11.4 H13.8 L7 19 Z" fill="#bcc1ca"/></svg>
<svg class="a" style="left:1122px;top:869px" width="16" height="16" viewBox="0 0 16 16" fill="none"><path d="M0 0 H16 L9.8 7.5 V15 L6.2 12.8 V7.5 Z" fill="#bcc1ca"/></svg>
<svg class="a" style="left:1848px;top:867px" width="14" height="19" viewBox="0 0 14 19" fill="none"><path d="M7 0 L13.8 7.6 H0.2 Z M0.2 11.4 H13.8 L7 19 Z" fill="#bcc1ca"/></svg>
<svg class="a" style="left:1872px;top:869px" width="16" height="16" viewBox="0 0 16 16" fill="none"><path d="M0 0 H16 L9.8 7.5 V15 L6.2 12.8 V7.5 Z" fill="#bcc1ca"/></svg>
<div class="a" style="left:1154px;top:861px;width:1px;height:30px;background:#555"></div>
<div class="a" style="left:1904px;top:861px;width:1px;height:30px;background:#555"></div>
<div class="a" style="left:406px;top:901px;width:1500px;height:50px;background:#f5f6fa;border-bottom:1px solid #dcdfe5"></div>
<div class="a" style="left:419px;top:918px;font-size:17px;line-height:20px;color:#1f2329;font-weight:normal;white-space:nowrap">1</div>
<div class="a" style="left:1169px;top:918px;font-size:17px;line-height:20px;color:#1f2329;font-weight:normal;white-space:nowrap;letter-spacing:0.8px">null</div>
<div class="a" style="left:406px;top:951px;width:1500px;height:50px;background:#2db9e2;border-bottom:1px solid #dcdfe5"></div>
<div class="a" style="left:419px;top:968px;font-size:17px;line-height:20px;color:#1f2329;font-weight:normal;white-space:nowrap">22</div>
<div class="a" style="left:1169px;top:968px;font-size:17px;line-height:20px;color:#1f2329;font-weight:normal;white-space:nowrap;letter-spacing:0.8px">33</div>
<div class="a" style="left:406px;top:1001px;width:1500px;height:50px;background:#f5f6fa;border-bottom:1px solid #dcdfe5"></div>
<div class="a" style="left:419px;top:1018px;font-size:17px;line-height:20px;color:#1f2329;font-weight:normal;white-space:nowrap">2</div>
<div class="a" style="left:1169px;top:1018px;font-size:17px;line-height:20px;color:#1f2329;font-weight:normal;white-space:nowrap;letter-spacing:0.8px">null</div>
<div class="a" style="left:406px;top:1051px;width:1500px;height:50px;background:#f5f6fa;border-bottom:1px solid #dcdfe5"></div>
<div class="a" style="left:419px;top:1068px;font-size:17px;line-height:20px;color:#1f2329;font-weight:normal;white-space:nowrap">4</div>
<div class="a" style="left:1169px;top:1068px;font-size:17px;line-height:20px;color:#1f2329;font-weight:normal;white-space:nowrap;letter-spacing:0.8px">null</div>
<div class="a" style="left:406px;top:1101px;width:1500px;height:10px;background:#f5f6fa"></div>
<div class="a" style="left:1155px;top:901px;width:1px;height:210px;background:#dcdfe5"></div>
<div class="a" style="left:1906px;top:901px;width:1px;height:210px;background:#dcdfe5"></div>
<div class="a" style="left:1907px;top:901px;width:11px;height:25px;background:#6b6f78;border-radius:5px"></div>
<div class="a" style="left:406px;top:1111px;width:1512px;height:50px;background:#e8ebf1"></div>
<div class="a" style="left:400px;top:1110px;width:80px;height:44px;border:2px solid #e5141d"></div>
<div class="a" style="left:416px;top:1121px;width:58px;height:30px;background:#0a7cff;border-radius:3px;color:#fff;font-size:17px;line-height:35px;text-align:center;letter-spacing:4px;text-indent:4px">保存</div>
<div class="a" style="left:489px;top:1121px;width:59px;height:30px;background:#0a7cff;border-radius:3px;color:#fff;font-size:17px;line-height:35px;text-align:center;letter-spacing:4px;text-indent:4px">设置</div>
<svg class="a" style="left:568px;top:1120px" width="30" height="30" viewBox="0 0 30 30" fill="none"><rect x="6.9" y="7.8" width="16.2" height="16.3" rx="2.6" stroke="#3592e0" stroke-width="1.6"/><path d="M15 11.6 L10 15.8 Q9.6 16.6 10.6 16.6 H12.6 V18.8 Q12.6 20.6 15 20.6 Q17.4 20.6 17.4 18.8 V16.6 H19.4 Q20.4 16.6 20 15.8 Z" stroke="#3592e0" stroke-width="1.4" stroke-linejoin="round"/></svg>
<div class="a" style="left:599px;top:1128px;font-size:17px;line-height:20px;color:#1f2329;font-weight:normal;white-space:nowrap;letter-spacing:0.8px">导出结果集/表</div>
<div class="a" style="left:1293px;top:1119px;width:146px;height:35px;background:#e8ebf1;border:1px solid #dfe2e8;border-radius:3px"></div>
<div class="a" style="left:1405px;top:1120px;width:33px;height:33px;background:#f5f6fa"></div>
<div class="a" style="left:1305px;top:1128px;font-size:17px;line-height:20px;color:#1f2329;font-weight:normal;white-space:nowrap">总条数：<span style="color:#2f86ff">99</span></div>
<svg class="a" style="left:1406px;top:1120px" width="30" height="30" viewBox="0 0 30 30" fill="none"><path d="M16.8 8.7 H10.2 Q7.5 8.7 7.5 11.4 V21.6 Q7.5 24.3 10.2 24.3 H20.7 Q23.4 24.3 23.4 21.6 V15.2" stroke="#111" stroke-width="1.6"/><circle cx="22.2" cy="9.6" r="2.4" stroke="#111" stroke-width="1.5"/><path d="M11.1 19.9 L13.4 16.5 L16.8 18.1 L19.6 14.3" stroke="#111" stroke-width="1.5"/></svg>
<div class="a" style="left:1460px;top:1119px;width:135px;height:35px;background:#dee1e8;border-radius:3px"></div>
<svg class="a" style="left:1492px;top:1130px" width="8" height="13" viewBox="0 0 8 13" fill="none"><path d="M7 0.8 L1.2 6.5 L7 12.2" stroke="#8f949c" stroke-width="1.4"/></svg>
<div class="a" style="left:1513px;top:1128px;font-size:17px;line-height:20px;color:#9ca1a9;font-weight:normal;white-space:nowrap">上一页</div>
<div class="a" style="left:1605px;top:1119px;width:135px;height:35px;background:#dee1e8;border-radius:3px"></div>
<div class="a" style="left:1636px;top:1128px;font-size:17px;line-height:20px;color:#9ca1a9;font-weight:normal;white-space:nowrap">下一页</div>
<svg class="a" style="left:1700px;top:1130px" width="8" height="13" viewBox="0 0 8 13" fill="none"><path d="M1 0.8 L6.8 6.5 L1 12.2" stroke="#8f949c" stroke-width="1.4"/></svg>
<div class="a" style="left:1750px;top:1119px;width:112px;height:35px;background:#e8ebf1;border:1px solid #dfe2e8;border-radius:3px"></div>
<div class="a" style="left:1765px;top:1128px;font-size:17px;line-height:20px;color:#1f2329;font-weight:normal;white-space:nowrap">100</div>
<div class="a" style="left:1867px;top:1128px;font-size:17px;line-height:20px;color:#1f2329;font-weight:normal;white-space:nowrap">条/页</div>
<div class="a" style="left:1918px;top:0;width:1px;height:1162px;background:#2a4c8c"></div>
<div class="a" style="left:0;top:1161px;width:1919px;height:1px;background:#6f7278"></div>
<div class="a" style="left:0;top:1161px;width:285px;height:1px;background:#2a8aa8"></div>
<div class="a" style="left:0;top:0;width:1px;height:1162px;background:#2a88b2"></div>
<div class="a" style="left:0;top:147px;width:1px;height:443px;background:#a9a9a9"></div>
</body></html>
